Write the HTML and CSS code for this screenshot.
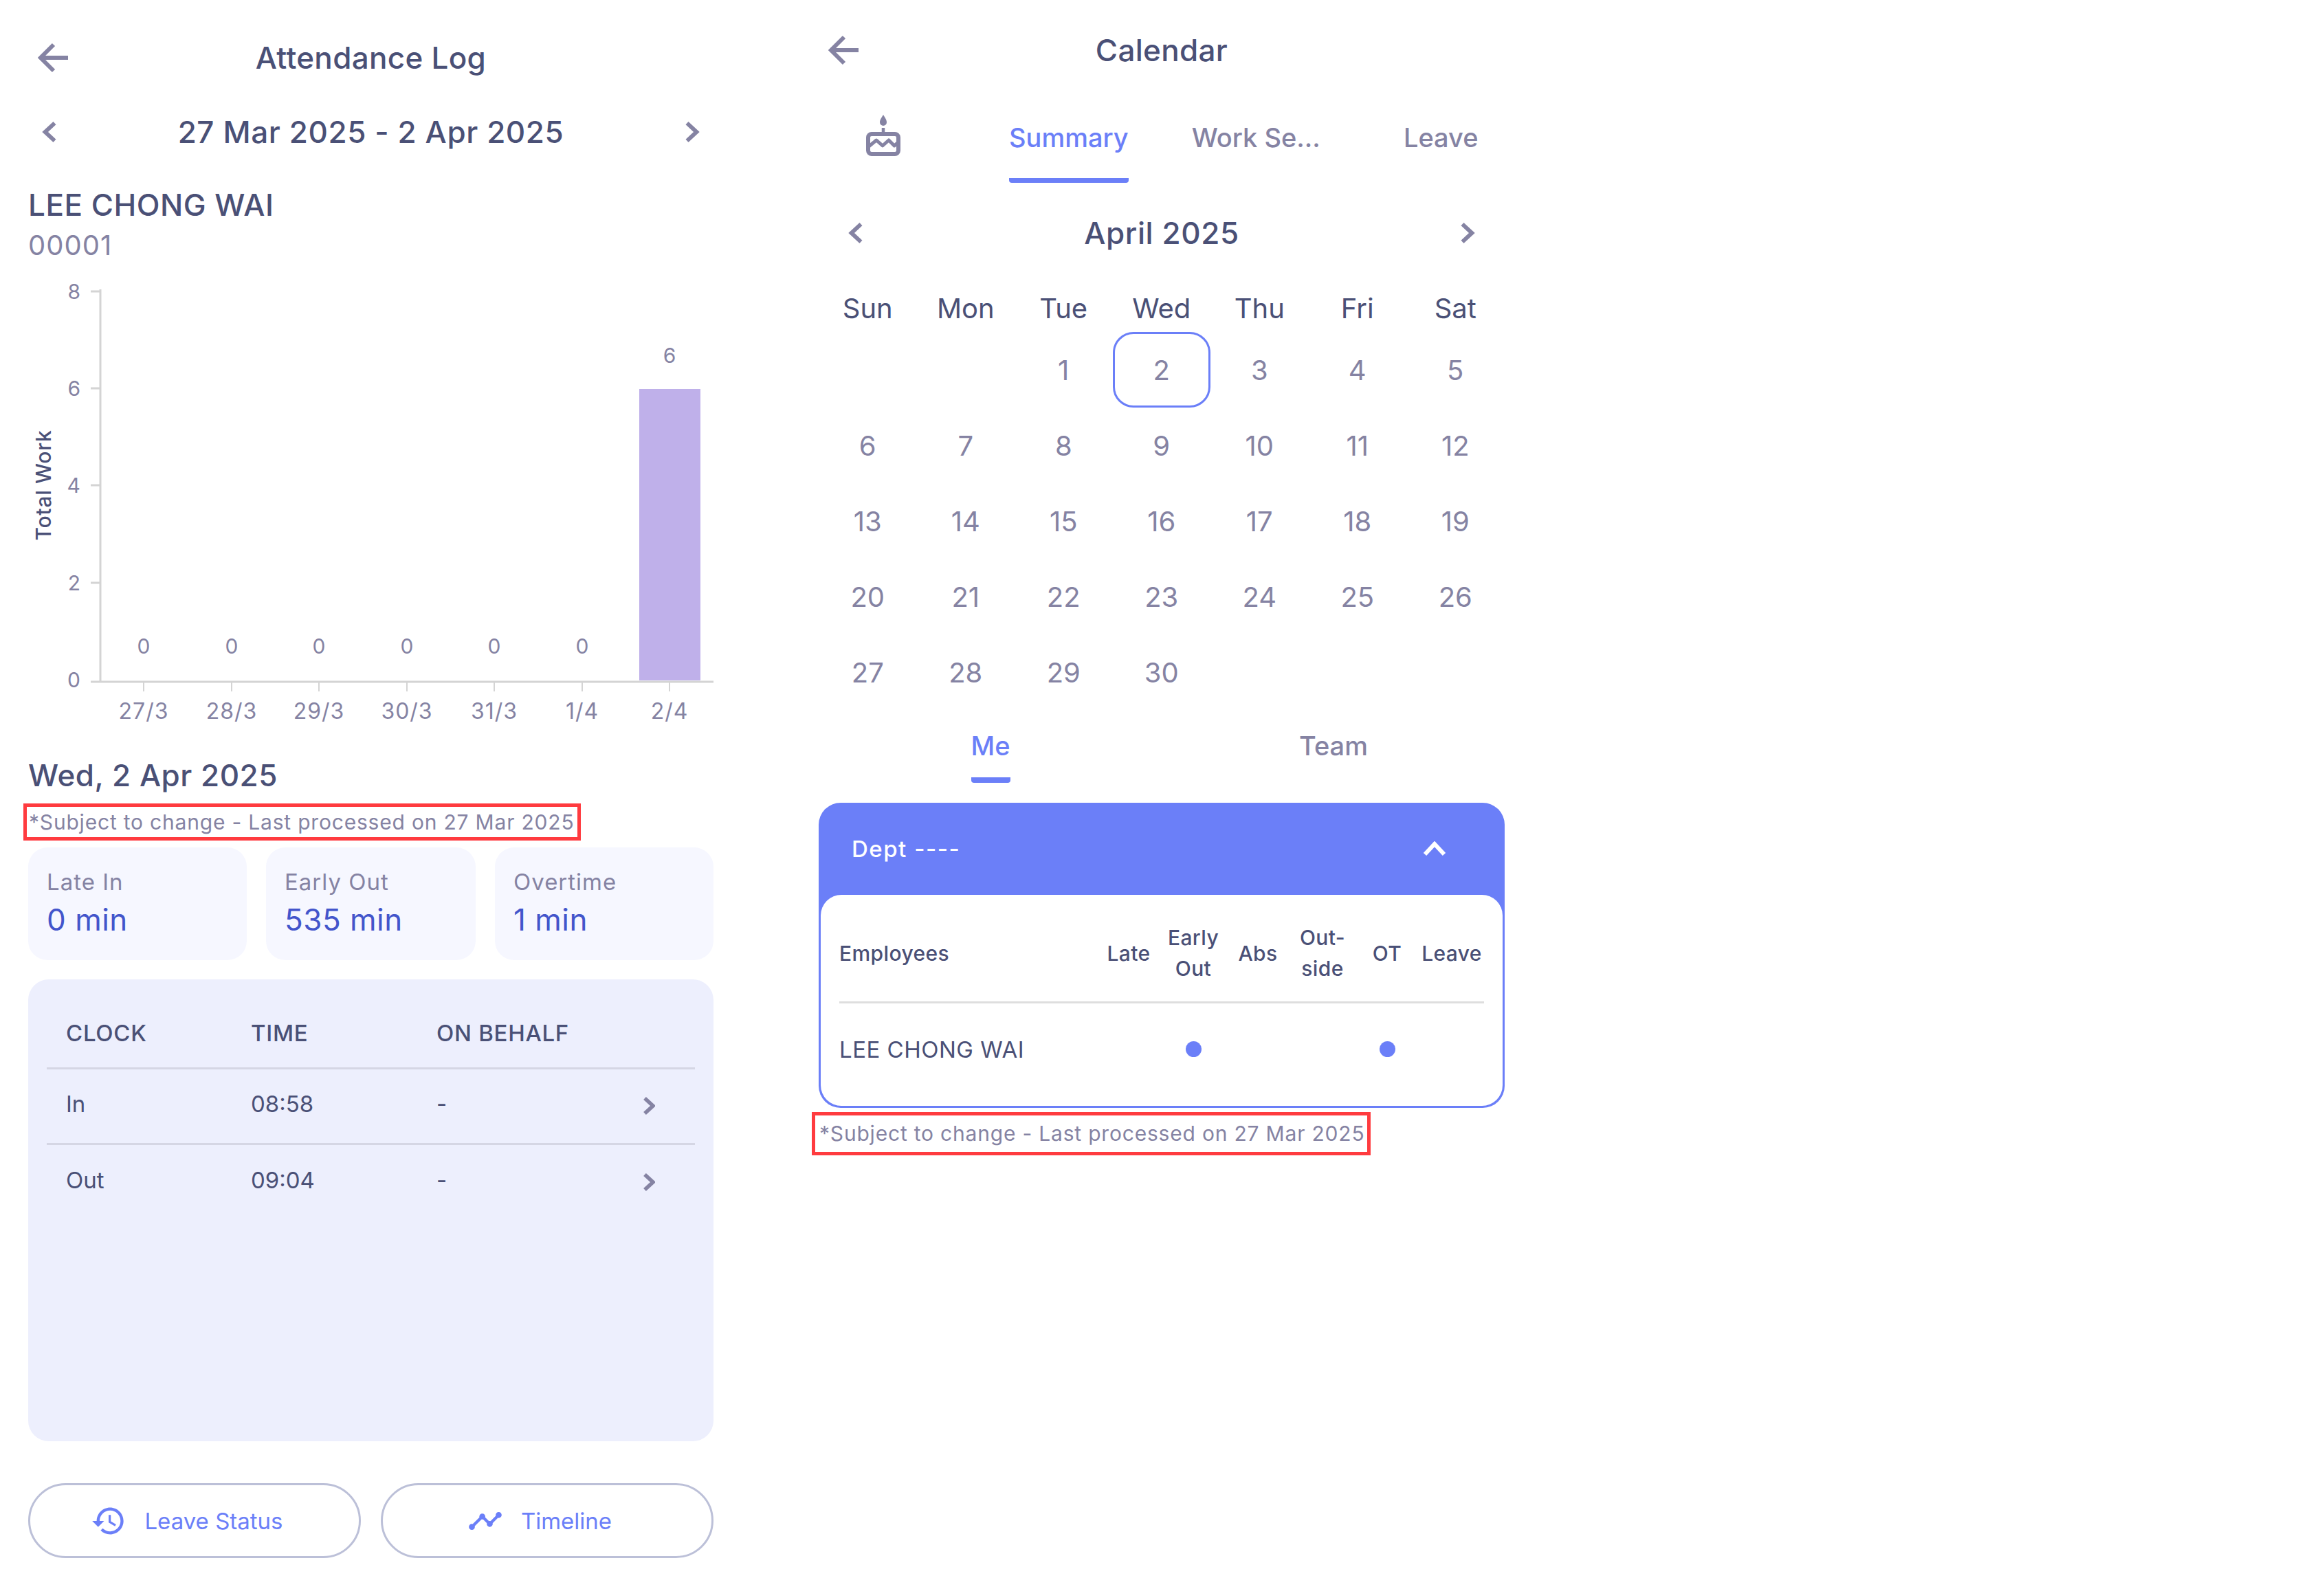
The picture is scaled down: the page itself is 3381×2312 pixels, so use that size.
FILE: index.html
```html
<!DOCTYPE html>
<html lang="en">
<head>
    <meta charset="UTF-8">
    <title>Attendance Log and Calendar</title>
    <link rel="stylesheet" href="styles.css">
</head>
<body>

<div class="page">

    <section class="attendance">
        <div class="top-bar">
            <svg class="back-icon" viewBox="0 0 46 46"><path d="M44 23H4M23 4 4 23l19 19"/></svg>
            <h1 class="title">Attendance Log</h1>
        </div>

        <div class="range-nav">
            <svg class="chev" viewBox="0 0 20 30"><path d="M17 3 4 15l13 12"/></svg>
            <span class="range-label">27 Mar 2025 - 2 Apr 2025</span>
            <svg class="chev" viewBox="0 0 20 30"><path d="M3 3l13 12L3 27"/></svg>
        </div>

        <div class="person">
            <div class="person-name">LEE CHONG WAI</div>
            <div class="person-id">00001</div>
        </div>

        <svg class="chart" viewBox="0 0 997 660">
            <g class="axis">
                <path d="M105 22V593M91 593H997"/>
                <path d="M91 25H105M91 166H105M91 307H105M91 449H105"/>
                <path class="tick" d="M168 593v14M296 593v14M423 593v14M551 593v14M678 593v14M806 593v14M933 593v14"/>
            </g>
            <rect class="bar" x="889" y="167" width="89" height="424"/>
            <g class="y-labels">
                <text x="76" y="36">8</text>
                <text x="76" y="177">6</text>
                <text x="76" y="318">4</text>
                <text x="76" y="460">2</text>
                <text x="76" y="601">0</text>
            </g>
            <g class="data-labels">
                <text x="168" y="552">0</text>
                <text x="296" y="552">0</text>
                <text x="423" y="552">0</text>
                <text x="551" y="552">0</text>
                <text x="678" y="552">0</text>
                <text x="806" y="552">0</text>
                <text x="933" y="129">6</text>
            </g>
            <g class="x-labels">
                <text x="168" y="647">27/3</text>
                <text x="296" y="647">28/3</text>
                <text x="423" y="647">29/3</text>
                <text x="551" y="647">30/3</text>
                <text x="678" y="647">31/3</text>
                <text x="806" y="647">1/4</text>
                <text x="933" y="647">2/4</text>
            </g>
            <text class="y-title" transform="translate(33 307) rotate(-90)">Total Work</text>
        </svg>

        <h2 class="day-title">Wed, 2 Apr 2025</h2>
        <div class="note">*Subject to change - Last processed on 27 Mar 2025</div>

        <div class="stats">
            <div class="stat">
                <div class="stat-label">Late In</div>
                <div class="stat-value">0 min</div>
            </div>
            <div class="stat">
                <div class="stat-label">Early Out</div>
                <div class="stat-value">535 min</div>
            </div>
            <div class="stat">
                <div class="stat-label">Overtime</div>
                <div class="stat-value">1 min</div>
            </div>
        </div>

        <div class="clock-panel">
            <div class="clock-row clock-head">
                <span>CLOCK</span>
                <span>TIME</span>
                <span>ON BEHALF</span>
            </div>
            <div class="clock-row">
                <span>In</span>
                <span>08:58</span>
                <span>-</span>
                <svg class="row-chev" viewBox="0 0 18 26"><path d="M3 2l12 11L3 24"/></svg>
            </div>
            <div class="clock-row">
                <span>Out</span>
                <span>09:04</span>
                <span>-</span>
                <svg class="row-chev" viewBox="0 0 18 26"><path d="M3 2l12 11L3 24"/></svg>
            </div>
        </div>

        <div class="actions">
            <button class="action-button">
                <svg class="action-icon" viewBox="0 0 24 24"><path d="M13 3c-4.97 0-9 4.03-9 9H1l3.89 3.89.07.14L9 12H6c0-3.87 3.13-7 7-7s7 3.13 7 7-3.13 7-7 7c-1.93 0-3.68-.79-4.94-2.06l-1.42 1.42C8.27 19.99 10.51 21 13 21c4.97 0 9-4.03 9-9s-4.03-9-9-9zm-1 5v5l4.28 2.54.72-1.21-3.5-2.08V8H12z"/></svg>
                Leave Status
            </button>
            <button class="action-button">
                <svg class="action-icon" viewBox="0 0 24 24"><path d="M23 8c0 1.1-.9 2-2 2-.18 0-.35-.02-.51-.07l-3.56 3.55c.05.16.07.34.07.52 0 1.1-.9 2-2 2s-2-.9-2-2c0-.18.02-.36.07-.52l-2.55-2.55c-.16.05-.34.07-.52.07s-.36-.02-.52-.07l-4.55 4.56c.05.16.07.33.07.51 0 1.1-.9 2-2 2s-2-.9-2-2 .9-2 2-2c.18 0 .35.02.51.07l4.56-4.55C8.02 9.36 8 9.18 8 9c0-1.1.9-2 2-2s2 .9 2 2c0 .18-.02.36-.07.52l2.55 2.55c.16-.05.34-.07.52-.07s.36.02.52.07l3.55-3.56C19.02 8.35 19 8.18 19 8c0-1.1.9-2 2-2s2 .9 2 2z"/></svg>
                Timeline
            </button>
        </div>
    </section>

    <section class="calendar">
        <div class="top-bar top-bar-calendar">
            <svg class="back-icon" viewBox="0 0 46 46"><path d="M44 23H4M23 4 4 23l19 19"/></svg>
            <h1 class="title">Calendar</h1>
        </div>

        <div class="tabs">
            <svg class="cake-icon" viewBox="0 0 50 61">
                <path class="cake-flame" d="M25 0c-3 5-5 7.500-5 11a5 5 0 0 0 10 0c0-3.500-2-6-5-11z"/>
                <path class="cake-stem" d="M25 19v7"/>
                <rect class="cake-body" x="3" y="28" width="44" height="29" rx="5"/>
                <path class="cake-wave" d="M4 46 15 37l9 8 9-8 8 8 6-5"/>
            </svg>
            <span class="tab tab-active">Summary</span>
            <span class="tab tab-work">Work Se...</span>
            <span class="tab tab-leave">Leave</span>
        </div>

        <div class="month-nav">
            <svg class="chev" viewBox="0 0 20 30"><path d="M17 3 4 15l13 12"/></svg>
            <span class="range-label">April 2025</span>
            <svg class="chev" viewBox="0 0 20 30"><path d="M3 3l13 12L3 27"/></svg>
        </div>

        <div class="month-grid">
            <span class="weekday">Sun</span><span class="weekday">Mon</span><span class="weekday">Tue</span><span class="weekday">Wed</span><span class="weekday">Thu</span><span class="weekday">Fri</span><span class="weekday">Sat</span>
            <span class="day"></span><span class="day"></span><span class="day">1</span><span class="day today">2</span><span class="day">3</span><span class="day">4</span><span class="day">5</span>
            <span class="day">6</span><span class="day">7</span><span class="day">8</span><span class="day">9</span><span class="day">10</span><span class="day">11</span><span class="day">12</span>
            <span class="day">13</span><span class="day">14</span><span class="day">15</span><span class="day">16</span><span class="day">17</span><span class="day">18</span><span class="day">19</span>
            <span class="day">20</span><span class="day">21</span><span class="day">22</span><span class="day">23</span><span class="day">24</span><span class="day">25</span><span class="day">26</span>
            <span class="day">27</span><span class="day">28</span><span class="day">29</span><span class="day">30</span>
        </div>

        <div class="scope-tabs">
            <span class="scope scope-active">Me</span>
            <span class="scope">Team</span>
        </div>

        <div class="dept-card">
            <div class="dept-head">
                <span>Dept ----</span>
                <svg class="dept-chev" viewBox="0 0 34 22"><path d="M3 19 17 4l14 15"/></svg>
            </div>
            <div class="dept-body">
                <div class="dept-row dept-row-head">
                    <span class="dept-name">Employees</span>
                    <span>Late</span>
                    <span>Early<br>Out</span>
                    <span>Abs</span>
                    <span>Out-<br>side</span>
                    <span>OT</span>
                    <span>Leave</span>
                </div>
                <div class="dept-row dept-row-data">
                    <span class="dept-name">LEE CHONG WAI</span>
                    <span></span>
                    <span><i class="dot"></i></span>
                    <span></span>
                    <span></span>
                    <span><i class="dot"></i></span>
                    <span></span>
                </div>
            </div>
        </div>
        <div class="note note-calendar">*Subject to change - Last processed on 27 Mar 2025</div>
    </section>

</div>

</body>
</html>
```

FILE: styles.css
```css
* {
    box-sizing: border-box;
}

body {
    margin: 0;
    background-color: #fff;
    font-family: Inter, "Noto Sans", sans-serif;
    color: #4a5076;
}

.page {
    display: flex;
    gap: 153px;
    padding-left: 41px;
    min-height: 2312px;
}

svg path {
    fill: none;
}

/* shared bits */
.top-bar {
    display: grid;
    grid-template-columns: 1fr auto 1fr;
    align-items: center;
    height: 80px;
    margin-top: 44px;
    padding-left: 14px;
    padding-right: 14px;
}

.top-bar-calendar {
    margin-top: 34px;
    height: 78px;
}

.back-icon {
    width: 46px;
    height: 46px;
}

.back-icon path {
    stroke: #8583a3;
    stroke-width: 6;
}

.title {
    margin: 0;
    font-size: 44px;
    font-weight: 500;
    letter-spacing: 0.3px;
}

.chev {
    width: 22px;
    height: 32px;
}

.chev path, .row-chev path {
    stroke: #8583a3;
    stroke-width: 5.500;
}

.range-label {
    font-size: 44px;
    font-weight: 500;
    letter-spacing: 0.6px;
}

/* attendance */
.attendance {
    width: 997px;
    display: flex;
    flex-direction: column;
}

.range-nav {
    display: flex;
    justify-content: space-between;
    align-items: center;
    height: 80px;
    margin-top: 28px;
    padding: 0 20px;
}

.person {
    margin-top: 38px;
}

.person-name {
    font-size: 44px;
    font-weight: 500;
    line-height: 56px;
    letter-spacing: 0.5px;
}

.person-id {
    font-size: 40px;
    line-height: 50px;
    margin-top: 6px;
    color: #8583a3;
    letter-spacing: 1px;
}

.chart {
    display: block;
    width: 997px;
    height: 660px;
    margin-top: 17px;
}

.axis path {
    stroke: #d4d4d4;
    stroke-width: 3;
}

.axis .tick {
    stroke-width: 2;
}

.bar {
    fill: #bfb0ea;
}

.chart text {
    font-size: 30px;
    fill: #8583a3;
}

.y-labels text {
    text-anchor: end;
}

.data-labels text, .x-labels text {
    text-anchor: middle;
}

.chart .x-labels text {
    font-size: 32px;
    letter-spacing: 1px;
}

.chart .y-title {
    font-size: 30px;
    font-weight: 500;
    fill: #4a5076;
    text-anchor: middle;
    letter-spacing: 0.7px;
}

.day-title {
    margin: 41px 0 0;
    font-size: 44px;
    font-weight: 500;
    line-height: 56px;
    letter-spacing: 0.5px;
}

.note {
    align-self: flex-start;
    margin: 13px 0 0 -7px;
    padding: 0 5px 0 3px;
    height: 54px;
    line-height: 44px;
    font-size: 30px;
    letter-spacing: 0.8px;
    color: #8583a3;
    border: 5px solid #ff3b3f;
    white-space: nowrap;
}

.stats {
    display: grid;
    grid-template-columns: 318px 305px 318px;
    gap: 28px;
    margin-top: 10px;
}

.stat {
    height: 164px;
    padding: 28px 27px;
    background-color: #f6f7ff;
    border-radius: 28px;
}

.stat-label {
    font-size: 33px;
    line-height: 44px;
    letter-spacing: 1px;
    color: #8583a3;
}

.stat-value {
    margin-top: 5px;
    font-size: 44px;
    line-height: 56px;
    letter-spacing: 0.5px;
    color: #4355cb;
}

.clock-panel {
    height: 672px;
    margin-top: 28px;
    padding: 44px 27px 0;
    background-color: #edeffd;
    border-radius: 30px;
}

.clock-row {
    display: grid;
    grid-template-columns: 269px 270px 300px 1fr;
    align-items: center;
    height: 110px;
    padding: 0 0 8px 28px;
    border-bottom: 3px solid #d5d6e4;
    font-size: 33px;
}

.clock-row:last-child {
    border-bottom: none;
}

.clock-head {
    height: 87px;
    padding-bottom: 16px;
    font-weight: 500;
    letter-spacing: 0.7px;
}

.row-chev {
    width: 18px;
    height: 26px;
    margin-top: 6px;
}

.actions {
    display: flex;
    gap: 29px;
    margin-top: 61px;
}

.action-button {
    flex: 1;
    display: flex;
    justify-content: center;
    align-items: center;
    gap: 26px;
    height: 109px;
    padding: 0 22px 0 0;
    background: #fff;
    border: 3px solid #bcc0d8;
    border-radius: 55px;
    font-family: inherit;
    font-size: 33px;
    color: #6b7ff8;
}

.action-icon {
    width: 52px;
    height: 52px;
}

.action-icon path {
    fill: #6b7ff8;
}

/* calendar */
.calendar {
    width: 998px;
    display: flex;
    flex-direction: column;
}

.tabs {
    display: flex;
    align-items: flex-start;
    height: 115px;
    margin-top: 53px;
}

.cake-icon {
    width: 50px;
    height: 61px;
    margin-left: 69px;
    margin-top: 2px;
}

.cake-flame {
    fill: #8583a3 !important;
}

.cake-stem, .cake-wave, .cake-body {
    fill: none;
    stroke: #8583a3;
}

.cake-stem {
    stroke-width: 4.500;
}

.cake-body {
    stroke-width: 6;
}

.cake-wave {
    stroke-width: 5;
    stroke-linejoin: round;
}

.tab {
    height: 101px;
    padding-top: 12px;
    font-size: 38px;
    font-weight: 500;
    color: #8583a3;
    white-space: nowrap;
}

.tab-active {
    margin-left: 158px;
    color: #6b7ff8;
    border-bottom: 7px solid #6b7ff8;
    border-radius: 0 0 4px 4px;
}

.tab-work {
    margin-left: 92px;
}

.tab-leave {
    margin-left: 121px;
}

.month-nav {
    display: flex;
    justify-content: space-between;
    align-items: center;
    height: 60px;
    padding: 0 43px;
    margin-top: 29px;
}

.month-grid {
    display: grid;
    grid-template-columns: repeat(7, 142.5px);
    grid-template-rows: 65px;
    grid-auto-rows: 110px;
    margin-top: 49px;
    font-size: 40px;
}

.weekday, .day {
    display: flex;
    justify-content: center;
    align-items: center;
}

.weekday {
    height: 60px;
    color: #4a5076;
}

.day {
    color: #8583a3;
}

.today {
    border: 3px solid #6b7ff8;
    border-radius: 30px;
}

.scope-tabs {
    display: grid;
    grid-template-columns: 500px 498px;
    height: 77px;
    margin-top: 29px;
    font-size: 38px;
    font-weight: 500;
    color: #8583a3;
}

.scope {
    justify-self: center;
}

.scope-active {
    color: #6b7ff8;
    border-bottom: 8px solid #6b7ff8;
    border-radius: 0 0 4px 4px;
}

.dept-card {
    margin-top: 29px;
    padding: 0 3px 3px;
    background-color: #6b7ff8;
    border-radius: 32px;
}

.dept-head {
    display: flex;
    justify-content: space-between;
    align-items: center;
    height: 134px;
    padding: 0 82px 0 45px;
    color: #fff;
    font-size: 33px;
    font-weight: 500;
    letter-spacing: 1.5px;
}

.dept-chev {
    width: 34px;
    height: 22px;
}

.dept-chev path {
    stroke: #fff;
    stroke-width: 6;
}

.dept-body {
    padding: 0 27px;
    background-color: #fff;
    border-radius: 30px;
}

.dept-row {
    display: grid;
    grid-template-columns: 374px repeat(6, 94px);
    align-items: center;
    justify-items: center;
    font-size: 33px;
}

.dept-row-data {
    height: 149px;
    padding-bottom: 16px;
    letter-spacing: 0.5px;
}

.dept-row-head {
    height: 158px;
    padding-top: 15px;
    border-bottom: 3px solid #dedede;
    font-size: 30px;
    font-weight: 500;
    line-height: 45px;
    letter-spacing: 0.4px;
    text-align: center;
}

.dept-name {
    justify-self: start;
}

.dot {
    display: block;
    width: 23px;
    height: 23px;
    border-radius: 50%;
    background-color: #6b7ff8;
}

.note-calendar {
    margin: 6px 0 0 -10px;
    padding: 0 4px 0 6px;
    height: 63px;
    line-height: 52px;
}
```
